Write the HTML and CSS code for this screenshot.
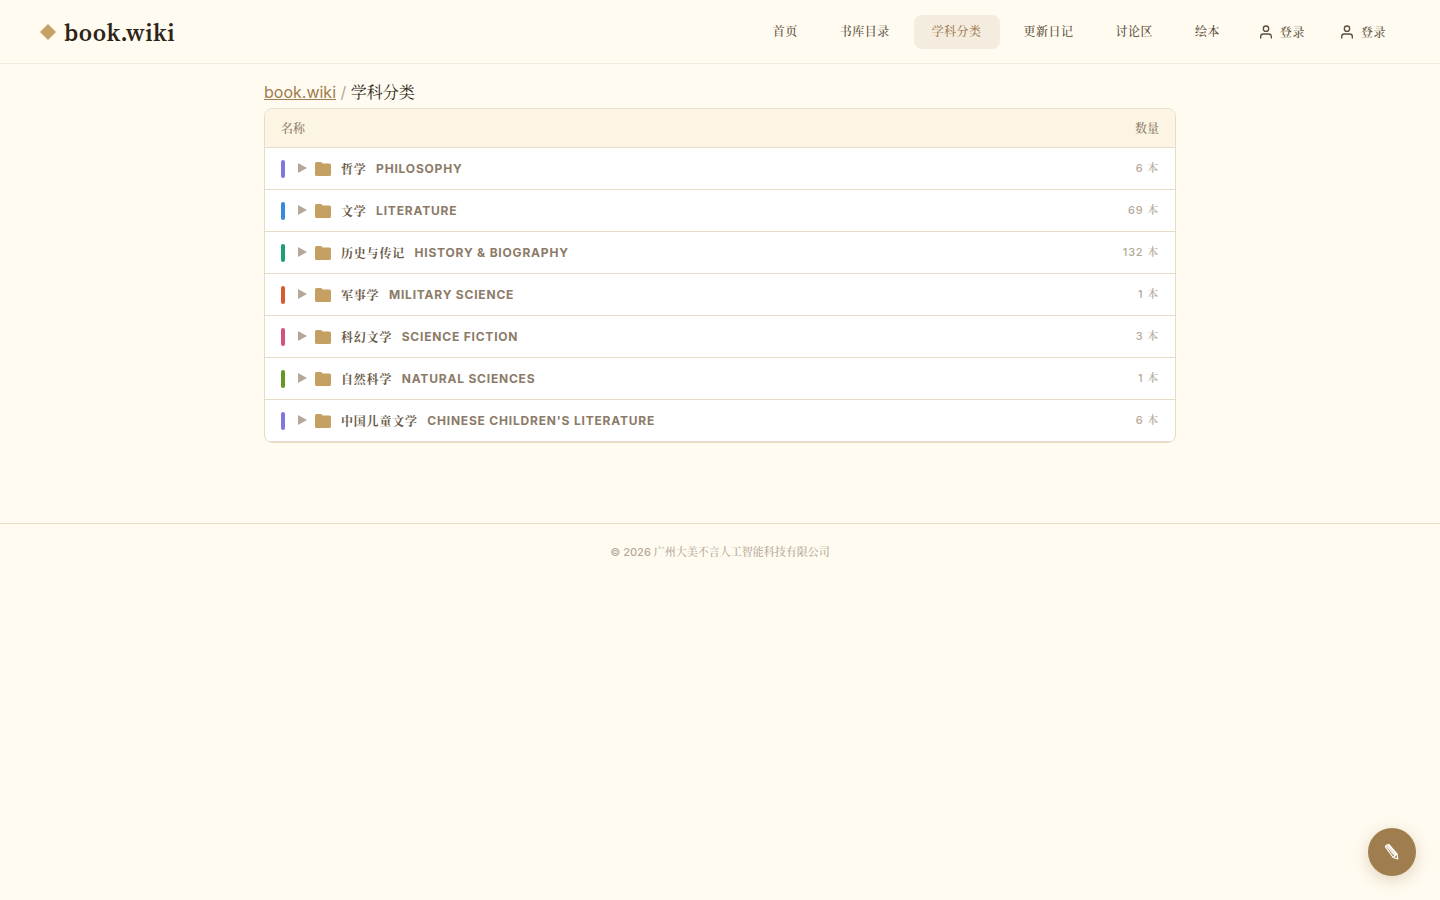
FILE: index.html
```
<!DOCTYPE html>
<html lang="zh-CN">
<head>
    <meta charset="UTF-8">
    <meta name="viewport" content="width=device-width, initial-scale=1.0">
    <title>学科分类 - book.wiki</title>
    <link rel="stylesheet" href="styles.css">
</head>
<body>
    <svg class="sprite" aria-hidden="true">
        <symbol id="icon-user" viewBox="0 0 24 24">
            <path d="M20 21v-2a4 4 0 0 0-4-4H8a4 4 0 0 0-4 4v2"/>
            <circle cx="12" cy="7" r="4"/>
        </symbol>
        <symbol id="icon-folder" viewBox="0 0 16 14">
            <path d="M1.600 0H5.600c.7 0 1 .2 1.400.7L7.800 1.500h6.600A1.600 1.600 0 0 1 16 3.100v9.300a1.600 1.600 0 0 1-1.600 1.600H1.600A1.600 1.600 0 0 1 0 12.400V1.600A1.600 1.600 0 0 1 1.600 0z"/>
        </symbol>
    </svg>

    <header class="header">
        <a class="logo" href="#"><span class="logo-mark"></span><span class="logo-text">book.wiki</span></a>
        <nav class="nav">
            <a class="nav-link" href="#">首页</a>
            <a class="nav-link" href="#">书库目录</a>
            <a class="nav-link active" href="#">学科分类</a>
            <a class="nav-link" href="#">更新日记</a>
            <a class="nav-link" href="#">讨论区</a>
            <a class="nav-link" href="#">绘本</a>
            <a class="nav-login" href="#"><svg class="icon-user"><use href="#icon-user"/></svg><span>登录</span></a>
            <a class="nav-login" href="#"><svg class="icon-user"><use href="#icon-user"/></svg><span>登录</span></a>
        </nav>
    </header>

    <main class="container">
        <div class="breadcrumb"><a href="#">book.wiki</a> <span class="sep">/</span> <span>学科分类</span></div>
        <div class="tree">
            <div class="tree-head"><span>名称</span><span>数量</span></div>
            <div class="tree-row">
                <span class="bar purple"></span><span class="arrow"></span><svg class="icon-folder"><use href="#icon-folder"/></svg>
                <span class="name">哲学</span><span class="name-en">PHILOSOPHY</span><span class="count">6 本</span>
            </div>
            <div class="tree-row">
                <span class="bar blue"></span><span class="arrow"></span><svg class="icon-folder"><use href="#icon-folder"/></svg>
                <span class="name">文学</span><span class="name-en">LITERATURE</span><span class="count">69 本</span>
            </div>
            <div class="tree-row">
                <span class="bar teal"></span><span class="arrow"></span><svg class="icon-folder"><use href="#icon-folder"/></svg>
                <span class="name">历史与传记</span><span class="name-en">HISTORY &amp; BIOGRAPHY</span><span class="count">132 本</span>
            </div>
            <div class="tree-row">
                <span class="bar orange"></span><span class="arrow"></span><svg class="icon-folder"><use href="#icon-folder"/></svg>
                <span class="name">军事学</span><span class="name-en">MILITARY SCIENCE</span><span class="count">1 本</span>
            </div>
            <div class="tree-row">
                <span class="bar pink"></span><span class="arrow"></span><svg class="icon-folder"><use href="#icon-folder"/></svg>
                <span class="name">科幻文学</span><span class="name-en">SCIENCE FICTION</span><span class="count">3 本</span>
            </div>
            <div class="tree-row">
                <span class="bar green"></span><span class="arrow"></span><svg class="icon-folder"><use href="#icon-folder"/></svg>
                <span class="name">自然科学</span><span class="name-en">NATURAL SCIENCES</span><span class="count">1 本</span>
            </div>
            <div class="tree-row">
                <span class="bar purple"></span><span class="arrow"></span><svg class="icon-folder"><use href="#icon-folder"/></svg>
                <span class="name">中国儿童文学</span><span class="name-en">CHINESE CHILDREN'S LITERATURE</span><span class="count">6 本</span>
            </div>
        </div>
    </main>

    <footer class="footer">© 2026 广州大美不言人工智能科技有限公司</footer>

    <button class="fab" title="反馈">
        <svg class="icon-pencil" viewBox="0 0 16 18">
            <path d="M1.500 3.800Q2 1.600 4.800 1.500L13 10.800 13.800 15.800 9.200 14.500z"/>
            <path d="M2.600 2.800L10.800 12.500M4 2L12 11.500M13 10.800L9.200 14.500"/>
        </svg>
    </button>
</body>
</html>
```
FILE: styles.css
```
* {
    box-sizing: border-box;
}
body {
    margin: 0;
    background: #fffbf0;
    color: #2c2416;
    font-family: Inter, "Noto Serif CJK SC", "Noto Serif SC", "Noto Sans CJK SC", serif;
    font-size: 16px;
    line-height: 24px;
}
a {
    color: inherit;
    text-decoration: none;
}
.sprite {
    display: none;
}
.header {
    display: flex;
    align-items: center;
    justify-content: space-between;
    height: 64px;
    padding: 0 40px;
    border-bottom: 1px solid #f0e9dc;
}
.logo {
    display: flex;
    align-items: center;
    gap: 8px;
    padding-top: 1px;
    font-family: "Source Serif 4", "Noto Serif CJK SC", "Noto Serif SC", "Liberation Serif", serif;
    font-size: 24px;
    font-weight: 600;
    letter-spacing: 0.48px;
}
.logo-text {
    padding-top: 2px;
}
.logo-mark {
    width: 16px;
    height: 16px;
    background: #c4a062;
    clip-path: polygon(50% 0, 100% 50%, 50% 100%, 0 50%);
}
.nav {
    display: flex;
    align-items: center;
    gap: 6px;
    font-size: 12px;
    letter-spacing: 0.49px;
    color: #5c4f3c;
    font-weight: 500;
}
.nav-link {
    height: 34px;
    padding: 0 18px;
    border-radius: 8px;
    line-height: 34px;
}
.nav-link.active {
    background: #f5ece0;
    color: #a07d4f;
}
.nav-login {
    display: flex;
    align-items: center;
    gap: 6px;
    padding: 0 14px;
}
.nav-login span {
    padding-top: 2px;
}
.icon-user {
    width: 16px;
    height: 16px;
    fill: none;
    stroke: currentColor;
    stroke-width: 2;
    stroke-linecap: round;
    stroke-linejoin: round;
}
.container {
    width: 912px;
    margin: 0 auto;
    padding: 16px 0 80px;
}
.breadcrumb {
    height: 28px;
    line-height: 24px;
}
.breadcrumb a {
    color: #a07d4f;
    text-decoration: underline;
}
.sep {
    color: #b5a898;
}
.tree {
    overflow: hidden;
    background: #fff;
    border: 1px solid #e8dcc8;
    border-radius: 8px;
}
.tree-head {
    display: flex;
    align-items: center;
    justify-content: space-between;
    height: 39px;
    padding: 1px 16px 0;
    background: #fdf5e3;
    border-bottom: 1px solid #e8dcc8;
    font-size: 12px;
    font-weight: 500;
    color: #8b7b68;
}
.tree-row {
    display: flex;
    align-items: center;
    height: 42px;
    padding: 0 16px;
    border-bottom: 1px solid #e8dcc8;
    font-size: 12px;
    letter-spacing: 0.8px;
}
.bar {
    width: 4px;
    height: 18px;
    margin-right: 13px;
    border-radius: 2px;
}
.purple { background: #7f77dd; }
.blue { background: #378add; }
.teal { background: #1d9e75; }
.orange { background: #d85a30; }
.pink { background: #d4537e; }
.green { background: #639922; }
.arrow {
    margin-right: 8px;
    margin-bottom: 1px;
    border-left: 9px solid #b5a898;
    border-top: 5px solid transparent;
    border-bottom: 5px solid transparent;
}
.icon-folder {
    width: 16px;
    height: 14px;
    margin-right: 10px;
    fill: #c4a062;
}
.name {
    margin-right: 9.5px;
    padding-top: 2px;
    font-weight: 700;
    color: #6b5b48;
}
.name-en {
    font-weight: 700;
    color: #8b7b68;
}
.count {
    margin-left: auto;
    padding-bottom: 1px;
    font-size: 11px;
    font-weight: 500;
    color: #b5a898;
}
.footer {
    padding-top: 16px;
    border-top: 1px solid #e8dcc8;
    font-size: 11px;
    font-weight: 500;
    text-align: center;
    color: #b5a898;
}
.fab {
    position: fixed;
    right: 24px;
    bottom: 24px;
    display: flex;
    align-items: center;
    justify-content: center;
    width: 48px;
    height: 48px;
    padding: 0;
    border: 0;
    border-radius: 50%;
    background: #a07d4f;
    box-shadow: 0 4px 16px rgba(160, 125, 79, 0.3);
}
.icon-pencil {
    width: 16px;
    height: 18px;
    fill: none;
    stroke: #fff;
    stroke-width: 1.2;
    stroke-linejoin: round;
}
```
